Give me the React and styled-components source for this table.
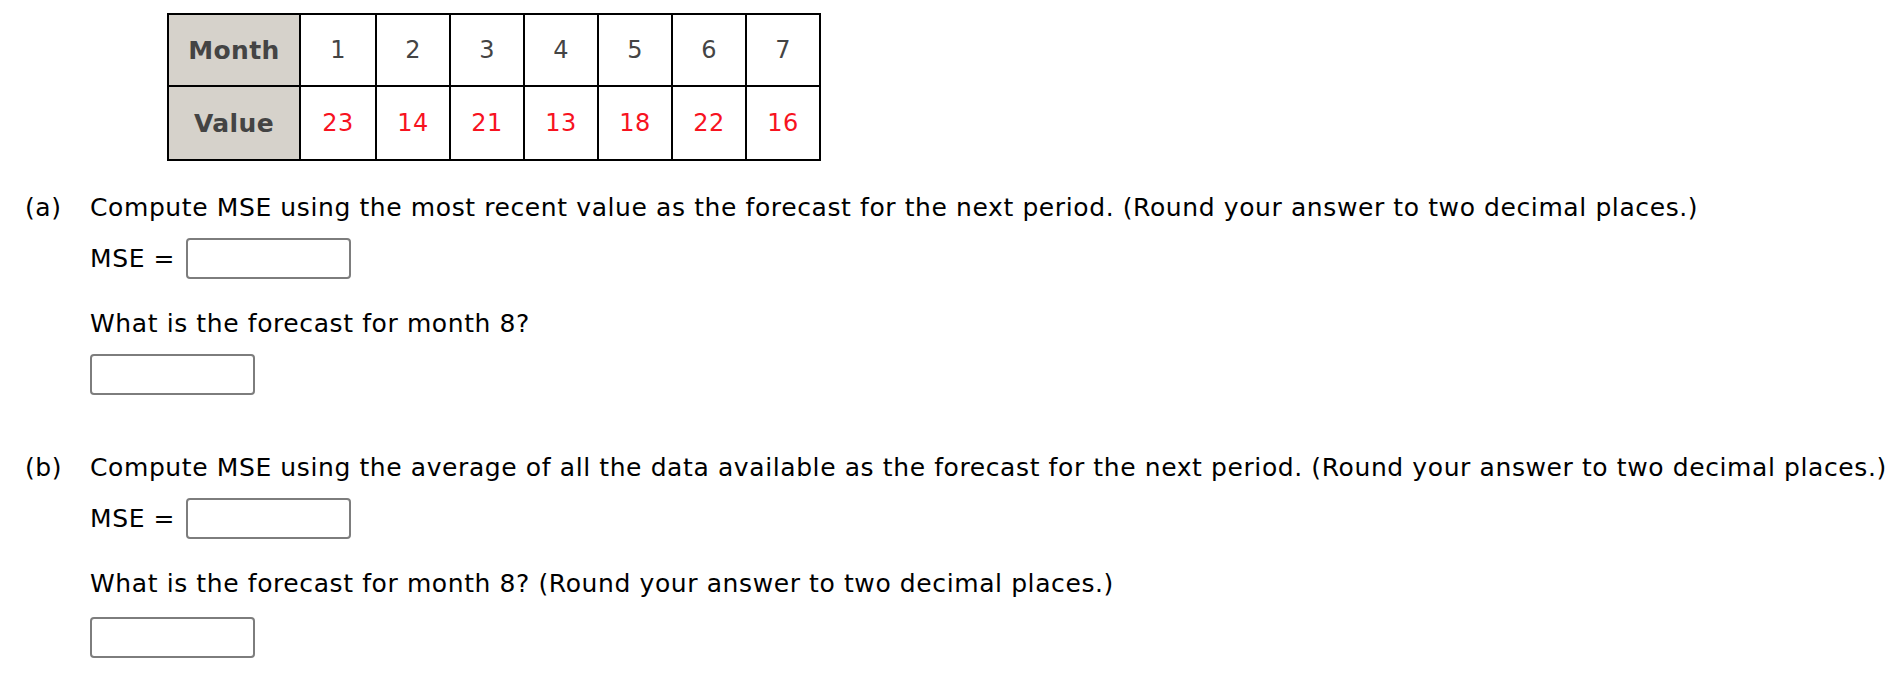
import React from "react";
import styled, { createGlobalStyle } from "styled-components";

const Global = createGlobalStyle`
  html, body { margin: 0; padding: 0; background: #fff; }
  body {
    font-family: "DejaVu Sans", Verdana, sans-serif;
    font-size: 25px;
    letter-spacing: 0.6px;
    color: #000;
  }
`;

const Page = styled.div`
  padding-top: 13px;
`;

const DataTable = styled.table`
  margin-left: 167px;
  border-collapse: collapse;
  border: 2px solid #000;
  font-family: "DejaVu Sans", Verdana, sans-serif;
  letter-spacing: 0.4px;
`;

const HeadCell = styled.th`
  width: 130px;
  height: ${(p) => (p.$tall ? 72 : 70)}px;
  padding: 0;
  border: 2px solid #000;
  background: #d6d2cb;
  color: #444;
  font-size: 25px;
  font-weight: bold;
  text-align: center;
`;

const Cell = styled.td`
  width: ${(p) => (p.$wide ? 74 : 72)}px;
  height: ${(p) => (p.$tall ? 72 : 70)}px;
  padding: 0;
  border: 2px solid #000;
  text-align: center;
  font-size: 24px;
  color: ${(p) => (p.$red ? "#f7131f" : "#444")};
`;

const Part = styled.section`
  display: flex;
  padding-left: 25px;
  margin-top: ${(p) => p.$top}px;
`;

const PartLabel = styled.div`
  width: 65px;
  flex: none;
  line-height: 29px;
`;

const PartBody = styled.div`
  display: flex;
  flex-direction: column;
  align-items: flex-start;
`;

const Line = styled.div`
  line-height: 29px;
  margin-top: ${(p) => p.$top || 0}px;
  white-space: nowrap;
`;

const AnswerRow = styled.div`
  display: flex;
  align-items: center;
  gap: 11px;
  margin-top: ${(p) => p.$top || 0}px;
`;

const RowLabel = styled.span`
  line-height: 29px;
  white-space: nowrap;
`;

const AnswerBox = styled.input`
  box-sizing: border-box;
  width: 165px;
  height: 41px;
  margin: ${(p) => p.$top || 0}px 0 0 0;
  border: 2px solid #7d7d7d;
  border-radius: 4px;
  background: #fff;
  font: inherit;
  padding: 0 6px;
`;

const months = [1, 2, 3, 4, 5, 6, 7];
const values = [23, 14, 21, 13, 18, 22, 16];

export default function App() {
  return (
    <>
      <Global />
      <Page>
        <DataTable>
          <tbody>
            <tr>
              <HeadCell>Month</HeadCell>
              {months.map((m, i) => (
                <Cell key={m} $wide={i === 0}>
                  {m}
                </Cell>
              ))}
            </tr>
            <tr>
              <HeadCell $tall>Value</HeadCell>
              {values.map((v, i) => (
                <Cell key={i} $red $tall $wide={i === 0}>
                  {v}
                </Cell>
              ))}
            </tr>
          </tbody>
        </DataTable>

        <Part $top={32}>
          <PartLabel>(a)</PartLabel>
          <PartBody>
            <Line>
              Compute MSE using the most recent value as the forecast for the next period. (Round your answer to two decimal places.)
            </Line>
            <AnswerRow $top={16}>
              <RowLabel>MSE =</RowLabel>
              <AnswerBox aria-label="MSE part a" />
            </AnswerRow>
            <Line $top={30}>What is the forecast for month 8?</Line>
            <AnswerBox $top={16} aria-label="Forecast part a" />
          </PartBody>
        </Part>

        <Part $top={58}>
          <PartLabel>(b)</PartLabel>
          <PartBody>
            <Line>
              Compute MSE using the average of all the data available as the forecast for the next period. (Round your answer to two decimal places.)
            </Line>
            <AnswerRow $top={16}>
              <RowLabel>MSE =</RowLabel>
              <AnswerBox aria-label="MSE part b" />
            </AnswerRow>
            <Line $top={30}>What is the forecast for month 8? (Round your answer to two decimal places.)</Line>
            <AnswerBox $top={19} aria-label="Forecast part b" />
          </PartBody>
        </Part>
      </Page>
    </>
  );
}
